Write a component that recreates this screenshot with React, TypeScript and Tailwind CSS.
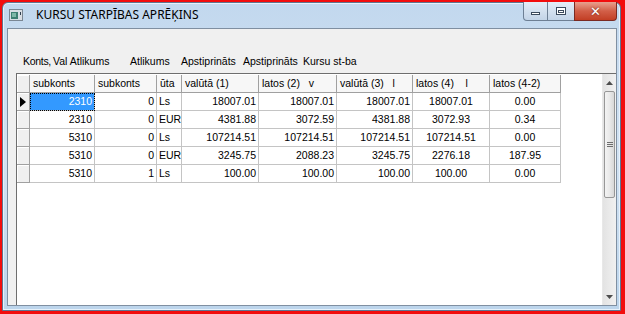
import React from "react";

const cols = [
  { w: 65, h: "subkonts", align: "right" },
  { w: 62, h: "subkonts", align: "right" },
  { w: 25, h: "ūta", align: "left" },
  { w: 77, h: "valūtā (1)", align: "right" },
  { w: 78, h: "latos (2)   v", align: "right" },
  { w: 76, h: "valūtā (3)   l", align: "right" },
  { w: 77, h: "latos (4)    l", align: "center" },
  { w: 71, h: "latos (4-2)", align: "center" },
];

const rows = [
  ["2310", "0", "Ls", "18007.01", "18007.01", "18007.01", "18007.01", "0.00"],
  ["2310", "0", "EUR", "4381.88", "3072.59", "4381.88", "3072.93", "0.34"],
  ["5310", "0", "Ls", "107214.51", "107214.51", "107214.51", "107214.51", "0.00"],
  ["5310", "0", "EUR", "3245.75", "2088.23", "3245.75", "2276.18", "187.95"],
  ["5310", "1", "Ls", "100.00", "100.00", "100.00", "100.00", "0.00"],
];

const alignCls: Record<string, string> = {
  right: "justify-end pr-[2px]",
  left: "justify-start pl-[2px]",
  center: "justify-center",
};

export default function App() {
  return (
    <div className="w-[625px] h-[314px] bg-[#f20d0d] pt-[2px] pl-[2px] pr-[4px] pb-[3px] flex" style={{ fontFamily: "'Liberation Sans', Arial, sans-serif" }}>
      <div className="flex-1 flex flex-col rounded-t-[6px] bg-gradient-to-b from-[#c2d8ee] via-[#d3e3f3] to-[#bcd5ec] border border-[#5f7590] shadow-[inset_0_0_0_1px_#e8f1fa]">
        {/* title bar */}
        <div className="h-[25px] flex items-start relative">
          <div className="flex items-center mt-[6px] ml-[6px]">
            <svg width="14" height="12" viewBox="0 0 14 12">
              <rect x="0.5" y="0.5" width="13" height="11" fill="#d9dee4" stroke="#7a8794" />
              <rect x="2" y="3" width="7" height="7" fill="#3f7f72" />
              <rect x="3" y="4" width="4" height="4" fill="#7fb8a8" />
              <rect x="11" y="3" width="1" height="3" fill="#304050" />
            </svg>
            <span className="ml-[13px] text-[12px] text-black leading-none" style={{ fontFamily: "'Noto Sans', 'Open Sans', sans-serif" }}>
              KURSU STARPĪBAS APRĒĶINS
            </span>
          </div>
          <div className="ml-auto mr-[3px] flex h-[19px] -mt-[1px]">
            <div className="w-[25px] h-full border border-[#6d7f94] border-t-0 rounded-bl-[4px] bg-gradient-to-b from-[#e4edf7] to-[#c3d4e7] flex items-center justify-center">
              <div className="w-[9px] h-[3px] border border-[#3b4a5c] bg-white mt-[5px]" />
            </div>
            <div className="w-[26px] h-full border-y border-[#6d7f94] border-t-0 bg-gradient-to-b from-[#e4edf7] to-[#c3d4e7] flex items-center justify-center">
              <div className="w-[10px] h-[8px] border border-[#3b4a5c] bg-white flex items-center justify-center">
                <div className="w-[6px] h-[3px] border border-[#3b4a5c]" />
              </div>
            </div>
            <div className="w-[43px] h-full border border-[#7a2a22] border-t-0 rounded-br-[4px] bg-gradient-to-b from-[#e7a08f] via-[#d25f48] to-[#c23e24] flex items-center justify-center">
              <span className="text-white font-bold text-[13px] leading-none" style={{ fontFamily: "'DejaVu Sans', sans-serif", textShadow: "0 0 2px #5a1a10" }}>✕</span>
            </div>
          </div>
        </div>
        {/* client */}
        <div className="flex-1 ml-[4px] mr-[3px] mb-[4px] border border-[#7f8fa1] bg-[#f0f0f0] flex flex-col">
          <div className="h-[44px] flex items-end pb-[7px] pl-[15px] text-[10.5px] text-black whitespace-pre leading-none">
            <span className="w-[30px] shrink-0 tracking-[-0.3px]">Konts,</span>
            <span className="w-[77px] shrink-0">Val Atlikums</span>
            <span className="w-[51px] shrink-0">Atlikums</span>
            <span className="w-[62px] shrink-0">Apstiprināts</span>
            <span className="w-[60px] shrink-0">Apstiprināts</span>
            <span className="shrink-0">Kursu st-ba</span>
          </div>
          <div className="flex-1 ml-[8px] flex border-t border-l border-[#6e6e6e] bg-white">
            <div className="flex-1 flex flex-col text-[10.5px] text-black leading-none">
              {/* header */}
              <div className="flex h-[18px] mt-[1px]">
                <div className="w-[13px] h-full bg-[#f0f0f0] border-r border-b border-[#a0a0a0] shadow-[inset_1px_1px_0_#ffffff]" />
                {cols.map((c, i) => (
                  <div key={i} className="h-full flex items-center pl-[3px] bg-[#f7f7f7] border-r border-b border-[#a0a0a0] whitespace-pre" style={{ width: c.w }}>
                    {c.h}
                  </div>
                ))}
              </div>
              {rows.map((r, ri) => (
                <div key={ri} className="flex h-[18px]">
                  <div className="w-[13px] h-full bg-[#f0f0f0] border-r border-b border-[#a0a0a0] shadow-[inset_1px_1px_0_#ffffff] flex items-center pl-[3px]">
                    {ri === 0 && (
                      <svg width="6" height="10" viewBox="0 0 6 10">
                        <path d="M0 0 L6 5 L0 10 Z" fill="#000" />
                      </svg>
                    )}
                  </div>
                  {r.map((v, ci) => {
                    const sel = ri === 0 && ci === 0;
                    return (
                      <div
                        key={ci}
                        className={`h-full flex items-center border-r border-b border-[#c4c4c4] overflow-hidden whitespace-nowrap ${alignCls[cols[ci].align]} ${sel ? "bg-[#3399ff] text-white outline-1 outline-dotted outline-black -outline-offset-1" : ""}`}
                        style={{ width: cols[ci].w }}
                      >
                        {v}
                      </div>
                    );
                  })}
                </div>
              ))}
            </div>
            {/* scrollbar */}
            <div className="w-[14px] flex flex-col bg-gradient-to-r from-[#e3e3e3] to-[#f1f1f1] border-l border-[#e8e8e8]">
              <div className="h-[17px] flex items-center justify-center">
                <svg width="7" height="4" viewBox="0 0 7 4"><path d="M0 4 L3.5 0 L7 4 Z" fill="#4d4d4d" /></svg>
              </div>
              <div className="h-[107px] mx-[1px] rounded-[2px] border border-[#979797] bg-gradient-to-r from-[#f3f3f3] via-[#e9e9e9] to-[#d8d8d8] flex items-center justify-center">
                <div className="flex flex-col gap-[1px]">
                  <div className="w-[6px] h-[1px] bg-[#6e6e6e]" />
                  <div className="w-[6px] h-[1px] bg-[#6e6e6e]" />
                  <div className="w-[6px] h-[1px] bg-[#6e6e6e]" />
                </div>
              </div>
              <div className="flex-1" />
              <div className="h-[17px] flex items-center justify-center">
                <svg width="7" height="4" viewBox="0 0 7 4"><path d="M0 0 L3.5 4 L7 0 Z" fill="#4d4d4d" /></svg>
              </div>
            </div>
          </div>
        </div>
      </div>
    </div>
  );
}
